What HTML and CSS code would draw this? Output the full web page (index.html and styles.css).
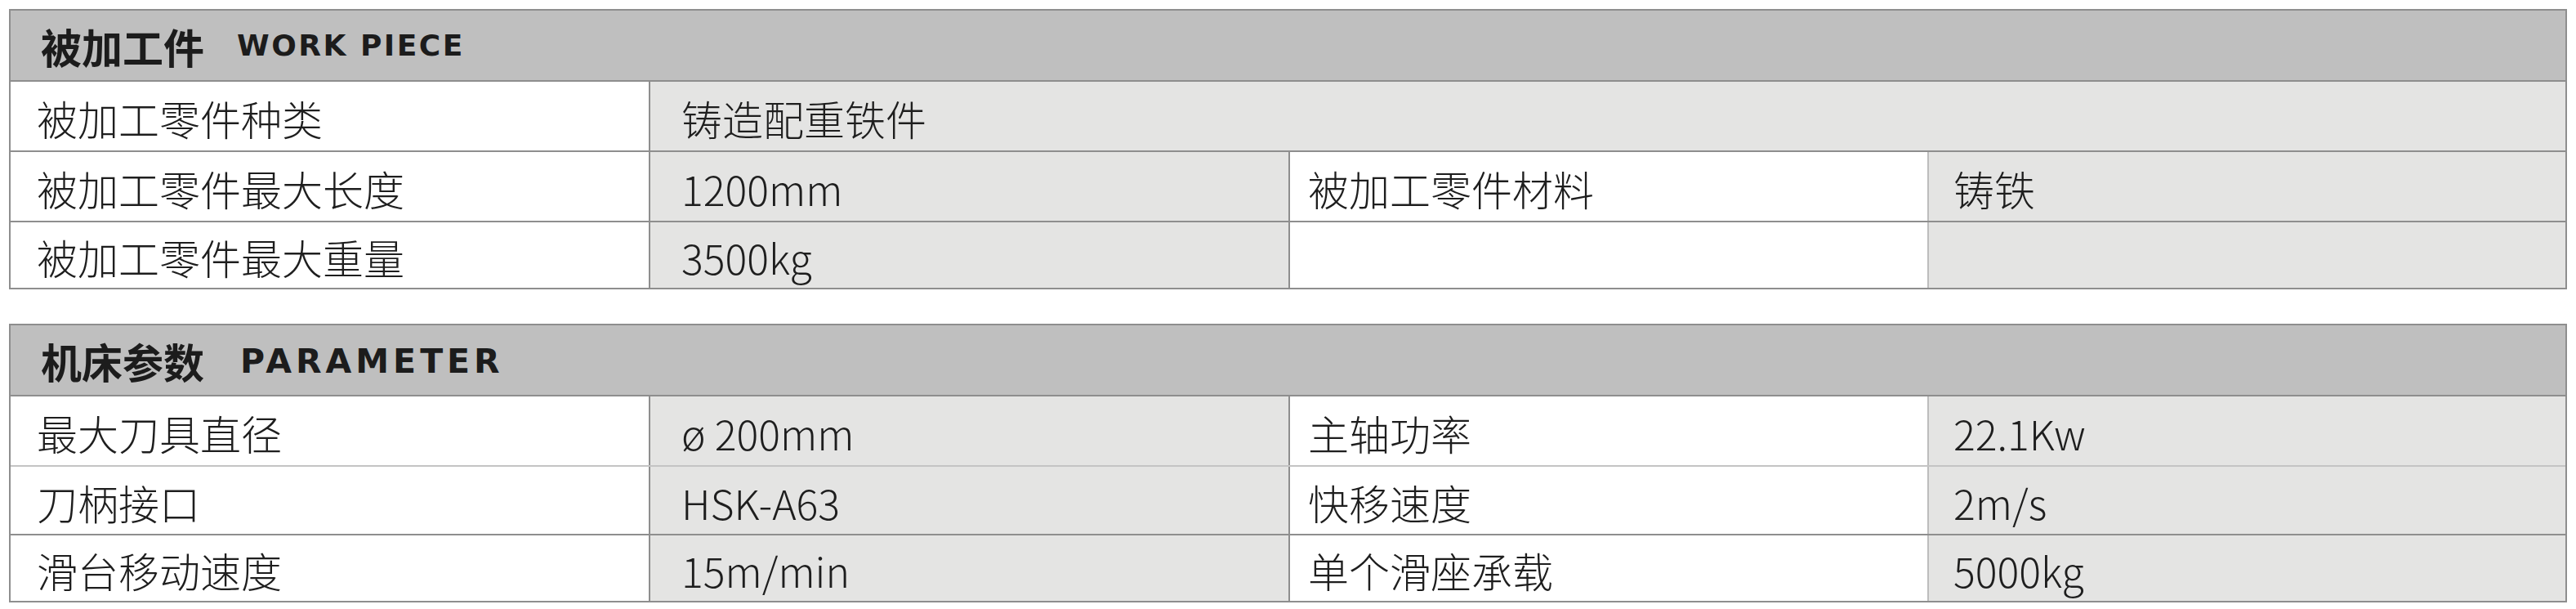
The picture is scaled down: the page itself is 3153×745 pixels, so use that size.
FILE: index.html
```html
<!DOCTYPE html>
<html lang="zh-CN">
<head>
<meta charset="utf-8">
<title>参数表</title>
<link rel="stylesheet" href="styles.css">
</head>
<body>
<div class="page">
  <section class="spec">
    <div class="spec-head"><span class="head-cn">被加工件</span><span class="head-en head-en-sm">WORK PIECE</span></div>
    <div class="spec-row">
      <div class="cell label">被加工零件种类</div>
      <div class="cell value span3">铸造配重铁件</div>
    </div>
    <div class="spec-row">
      <div class="cell label">被加工零件最大长度</div>
      <div class="cell value">1200mm</div>
      <div class="cell label label-right">被加工零件材料</div>
      <div class="cell value value-right">铸铁</div>
    </div>
    <div class="spec-row last">
      <div class="cell label">被加工零件最大重量</div>
      <div class="cell value">3500kg</div>
      <div class="cell label label-right"></div>
      <div class="cell value value-right"></div>
    </div>
  </section>

  <section class="spec">
    <div class="spec-head"><span class="head-cn">机床参数</span><span class="head-en">PARAMETER</span></div>
    <div class="spec-row">
      <div class="cell label">最大刀具直径</div>
      <div class="cell value">ø 200mm</div>
      <div class="cell label label-right">主轴功率</div>
      <div class="cell value value-right">22.1Kw</div>
    </div>
    <div class="spec-row light-top">
      <div class="cell label">刀柄接口</div>
      <div class="cell value">HSK-A63</div>
      <div class="cell label label-right">快移速度</div>
      <div class="cell value value-right">2m/s</div>
    </div>
    <div class="spec-row last">
      <div class="cell label">滑台移动速度</div>
      <div class="cell value">15m/min</div>
      <div class="cell label label-right">单个滑座承载</div>
      <div class="cell value value-right">5000kg</div>
    </div>
  </section>
</div>
</body>
</html>
```

FILE: styles.css
```css
* {
  box-sizing: border-box;
}

html, body {
  margin: 0;
  padding: 0;
  background: #ffffff;
}

.page {
  padding: 11px 11px 0 11px;
  display: flex;
  flex-direction: column;
  gap: 42px;
  width: 3153px;
}

.spec {
  border: 2px solid #8e8e8e;
  width: 3131px;
  font-family: "Noto Sans CJK SC", "Noto Sans", sans-serif;
  color: #1e1e1e;
}

.spec-head {
  height: 87px;
  background: #bfbfbf;
  border-bottom: 2px solid #8e8e8e;
  display: flex;
  align-items: center;
  padding-left: 37px;
  gap: 44px;
}

.head-cn {
  font-size: 50px;
  font-weight: 700;
  color: #1c1c1c;
  line-height: 1;
}

.head-en {
  font-family: "DejaVu Sans", sans-serif;
  font-weight: 700;
  font-size: 41px;
  letter-spacing: 5px;
  color: #1c1c1c;
  line-height: 1;
  padding-top: 4px;
}

.head-en-sm {
  font-size: 36px;
  letter-spacing: 2.5px;
  padding-top: 0;
  margin-left: -4px;
}

.spec-row {
  display: grid;
  grid-template-columns: 781px 783px 782px 1fr;
  height: 86px;
  border-bottom: 2px solid #8e8e8e;
}

.spec-row.last {
  height: 80px;
  border-bottom: none;
}

.spec > .spec-row.light-top {
  margin-top: -2px;
  border-top: 2px solid #c4c4c4;
}

.cell {
  display: flex;
  align-items: center;
  padding-left: 32px;
  font-size: 50px;
  font-weight: 300;
  line-height: 1;
  padding-top: 4px;
  white-space: nowrap;
}

.cell + .cell {
  border-left: 2px solid #8e8e8e;
}

.label {
  background: #ffffff;
}

.value {
  background: #e4e4e3;
  padding-left: 38px;
}

.label-right {
  padding-left: 22px;
}

.value-right {
  padding-left: 30px;
  border-left-color: #bdbdbd !important;
}

.span3 {
  grid-column: 2 / 5;
}
```
